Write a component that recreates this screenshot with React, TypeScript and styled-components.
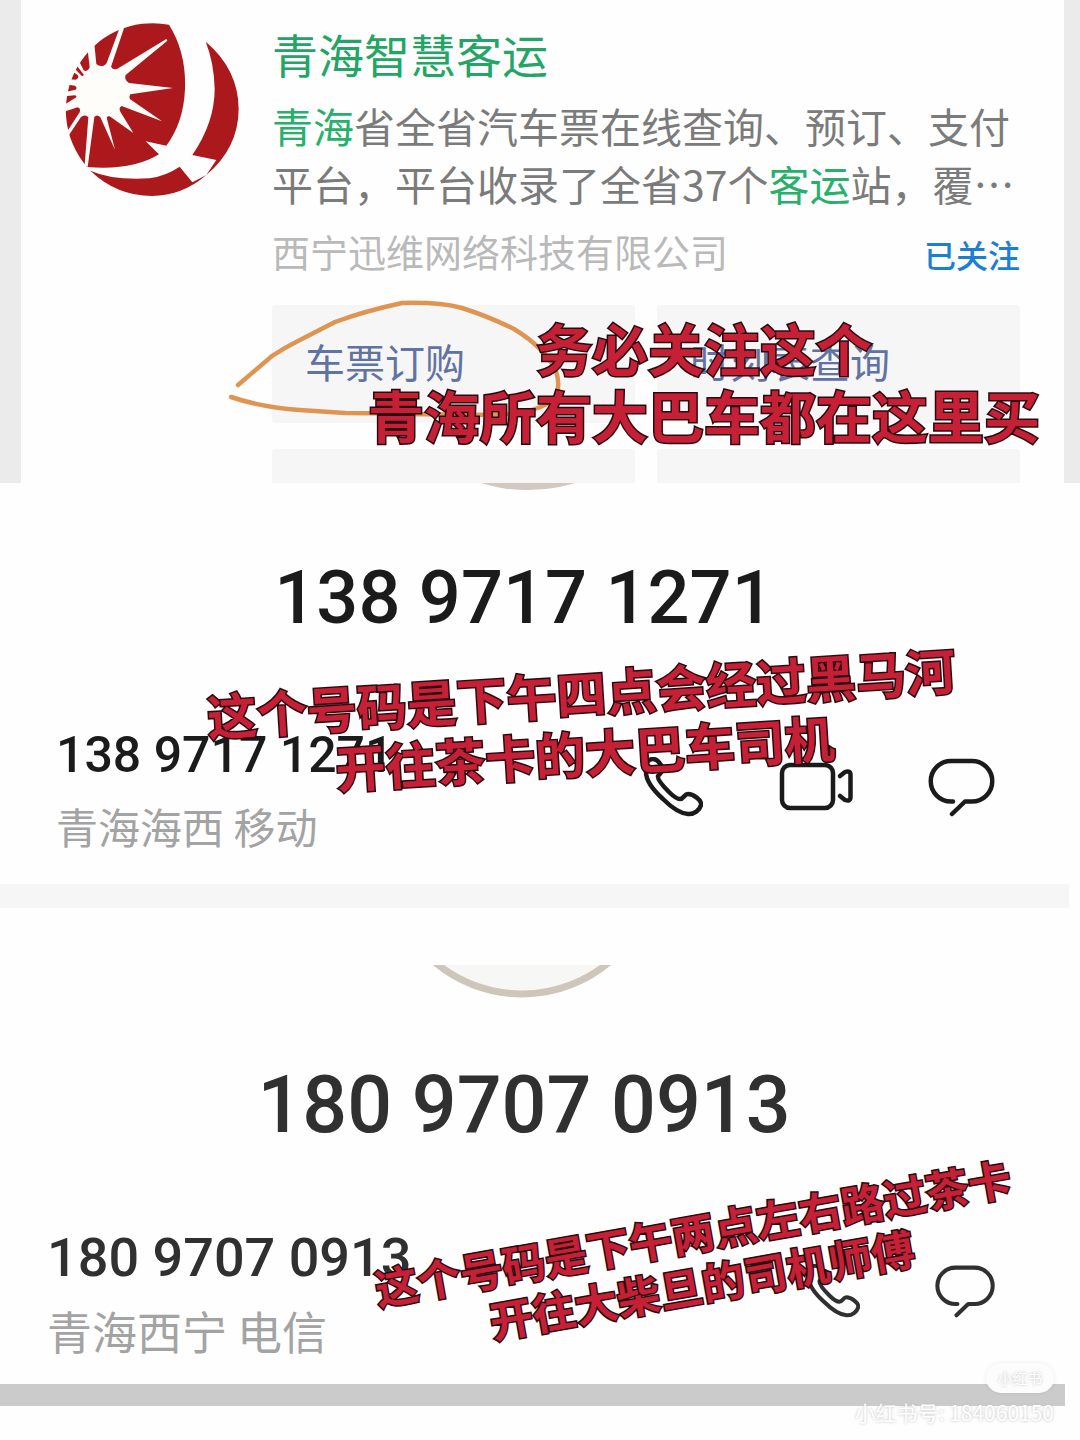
import React from "react";
import styled, { createGlobalStyle } from "styled-components";

const cjk = `"Noto Sans CJK SC", sans-serif`;

const GlobalStyle = createGlobalStyle`
  *, *::before, *::after { box-sizing: border-box; }
  body { margin: 0; background: #fefefe; font-family: ${cjk}; }
  button { border: 0; padding: 0; margin: 0; background: none; font: inherit; color: inherit; cursor: pointer; }
  h1, h2, p { margin: 0; font-weight: 400; }
  svg { display: block; }
`;

const Page = styled.main`
  position: relative;
  overflow: hidden;
`;

const MiniProgram = styled.section`
  position: relative;
  display: flex;
  gap: 33px;
  padding: 21px 44px 0 42px;
  border-left: 21px solid #ebebeb;
  border-right: 16px solid #ebebeb;
`;

const Logo = styled.svg`
  flex: none;
  width: 176px;
  height: 176px;
`;

const Info = styled.div`
  flex: 1;
  min-width: 0;
  white-space: nowrap;
`;

const Title = styled.h1`
  font-size: 46px;
  line-height: 64px;
  color: #22a565;
`;

const Description = styled.p`
  margin-top: 11px;
  font-size: 41px;
  line-height: 58px;
  color: #7b7b7b;
`;

const Match = styled.em`
  font-style: normal;
  color: #27b06c;
`;

const Publisher = styled.div`
  display: flex;
  justify-content: space-between;
  align-items: center;
  margin-top: 9px;
  line-height: 60px;
`;

const Company = styled.span`
  font-size: 38px;
  color: #b9b9b9;
`;

const Followed = styled.button`
  padding-top: 6px;
  font-size: 32px;
  line-height: 50px;
  font-weight: 500;
  color: #1c80d2;
`;

const Services = styled.div`
  display: grid;
  grid-template-columns: 1fr 1fr;
  gap: 26px 22px;
  margin-top: 24px;
`;

const Service = styled.button<{ $cut?: boolean }>`
  height: ${(p) => (p.$cut ? 34 : 118)}px;
  padding: 0 33px 6px;
  border-radius: ${(p) => (p.$cut ? "4px 4px 0 0" : "4px")};
  background: #f6f6f6;
  color: #6173a0;
  font-size: 40px;
  text-align: left;
`;

const HandDrawn = styled.svg`
  position: absolute;
  left: 206px;
  top: 296px;
  width: 340px;
  height: 126px;
  pointer-events: none;
`;

const Callout = styled.p<{ $x: string; $y: string; $size: number; $line: number; $angle?: number }>`
  position: absolute;
  left: ${(p) => p.$x};
  top: ${(p) => p.$y};
  transform: translate(-50%, -50%) rotate(${(p) => p.$angle ?? 0}deg);
  font-size: ${(p) => p.$size}px;
  line-height: ${(p) => p.$line}px;
  font-weight: 700;
  text-align: center;
  white-space: nowrap;
  color: #c52036;
  -webkit-text-stroke: 3px #2a0a10;
  paint-order: stroke fill;
  pointer-events: none;
`;

const Contact = styled.section<{ $ink: string }>`
  position: relative;
  color: ${(p) => p.$ink};
`;

const Avatar = styled.svg`
  width: 280px;
  height: 34px;
  margin: 0 auto;
`;

const Centered = styled.div<{ $gap: number }>`
  display: flex;
  flex-direction: column;
  gap: ${(p) => p.$gap}px;
  padding-right: 32px;
  text-align: center;
`;

const BigNumber = styled.h2<{ $size: number }>`
  font-family: Roboto, sans-serif;
  font-size: ${(p) => p.$size}px;
  font-weight: 500;
  line-height: 80px;
  white-space: nowrap;
`;

const Row = styled.div<{ $top: number; $bottom: number; $left: number }>`
  display: flex;
  justify-content: space-between;
  align-items: center;
  padding: ${(p) => `${p.$top}px 85px ${p.$bottom}px ${p.$left}px`};
`;

const Lines = styled.div<{ $gap: number }>`
  display: flex;
  flex-direction: column;
  gap: ${(p) => p.$gap}px;
  white-space: nowrap;
`;

const Number = styled.p<{ $size: number }>`
  font-family: Roboto, sans-serif;
  font-size: ${(p) => p.$size}px;
  font-weight: 500;
  line-height: 60px;
`;

const Carrier = styled.p<{ $size: number }>`
  font-size: ${(p) => p.$size}px;
  line-height: 54px;
  color: #a3a3a3;
`;

const Actions = styled.div`
  display: flex;
  align-items: center;
  gap: 74px;
`;

const Glyph = styled.svg`
  fill: none;
  stroke: currentColor;
  stroke-width: 4.5;
  stroke-linecap: round;
  stroke-linejoin: round;
`;

const Divider = styled.div<{ $color: string; $height: number; $end: number }>`
  height: ${(p) => p.$height}px;
  margin-right: ${(p) => p.$end}px;
  background: ${(p) => p.$color};
`;

const Spacer = styled.div`
  height: 57px;
`;

const Footer = styled.footer`
  position: relative;
  height: 34px;
`;

const Watermark = styled.div`
  position: absolute;
  right: 26px;
  bottom: 13px;
  display: flex;
  flex-direction: column;
  align-items: flex-end;
  gap: 4px;
  color: #fff;
  font-size: 21px;
  line-height: 30px;
  white-space: nowrap;
  text-shadow: 0 0 3px #bbb;
`;

const Badge = styled.span`
  width: 68px;
  border-radius: 15px;
  background: #fcfcfc;
  font-size: 15px;
  text-align: center;
  box-shadow: 0 0 4px rgba(0, 0, 0, 0.08);
`;

const PhoneIcon = ({ scale = 1 }: { scale?: number }) => (
  <Glyph width={60 * scale} height={64 * scale} viewBox="0 0 60 64" aria-hidden="true">
    <path d="M3 15C2 6 5 2 10 2c4 0 7 4 9 8 2 5-2 6-4 9-1 4 7 12 11 16 4 4 8 7 11 7 4 0 4-5 8-5 5 0 14 6 13 11-1 5-7 9.500-13 9-7-.5-17-7-25-15C10 33 3 23 3 15z" />
  </Glyph>
);

const VideoIcon = () => (
  <Glyph width="76" height="64" viewBox="0 0 76 64" aria-hidden="true">
    <rect x="5" y="8" width="51" height="43" rx="8" />
    <path d="M63 19l5-4q5.500-2 5.500 3v22q0 5-5.500 3l-5-4" />
  </Glyph>
);

const BubbleIcon = ({ scale = 1 }: { scale?: number }) => (
  <Glyph width={68 * scale} height={64 * scale} viewBox="0 0 68 64" aria-hidden="true">
    <path d="M26 44.500h-2A20.250 20.250 0 0 1 24 4h21a20.250 20.250 0 0 1 0 40.500h-7L25 57" />
  </Glyph>
);

export default function App() {
  return (
    <>
      <GlobalStyle />
      <Page>
        <MiniProgram>
          <Logo viewBox="190 66 528 528" role="img" aria-label="青海智慧客运">
            <g fill="#ac191c">
              <path d="M508 77Q560 160 556 270Q552 370 500 440L438 427L478 466Q400 515 262 504A261 261 0 0 1 508 77z" />
              <path d="M272 515Q340 545 450 538Q500 530 540 503L578 550L620 528Q548 590 457 591Q350 590 272 515z" />
              <path d="M618 128Q716 210 717 330Q716 448 620 528L650 483L578 468Q645 370 645 270Q643 190 618 128z" />
            </g>
            <path
              fill="#fffdfa"
              d="M360 86L373 88L334 203Q340 214 352 210L500 120L503 125L378 228Q372 242 388 252L520 267L392 286Q385 298 396 304L487 367L366 321Q356 326 362 338L401 402L330 352Q320 350 322 360L346 452L302 355Q292 344 284 354L264 504L255 498L266 355Q258 345 244 354L204 414L198 404L240 340Q244 328 234 325L193 338L193 318L230 295Q232 290 226 289L193 292L193 280L228 272Q234 266 226 260L198 256L202 240L228 242Q240 238 234 228L210 212L217 200L247 232L253 228L230 198L238 186L252 214Q264 220 270 205L264 153L284 134L290 195Q298 204 312 200Q320 198 322 190z"
            />
          </Logo>
          <Info>
            <Title>青海智慧客运</Title>
            <Description>
              <Match>青海</Match>省全省汽车票在线查询、预订、支付
              <br />
              平台，平台收录了全省37个<Match>客运</Match>站，覆…
            </Description>
            <Publisher>
              <Company>西宁迅维网络科技有限公司</Company>
              <Followed type="button">已关注</Followed>
            </Publisher>
            <Services>
              <Service type="button">车票订购</Service>
              <Service type="button">时刻表查询</Service>
              <Service type="button" $cut aria-label="更多服务" />
              <Service type="button" $cut aria-label="更多服务" />
            </Services>
          </Info>
          <HandDrawn viewBox="227 296 340 126" aria-hidden="true">
            <path
              d="M238 385L272 356Q284 348 298 341L335 322Q365 311 402 303Q440 302 462 308Q490 317 514 329Q545 348 556 371Q562 390 552 401Q535 413 495 415L400 414Q370 413 345 413L300 410Q260 407 231 397"
              fill="none"
              stroke="#de9552"
              strokeWidth="4.500"
              strokeLinecap="round"
              strokeLinejoin="round"
            />
          </HandDrawn>
          <Callout $x="calc(65% + 5px)" $y="380px" $size={56} $line={67}>
            务必关注这个
            <br />
            青海所有大巴车都在这里买
          </Callout>
        </MiniProgram>

        <Contact $ink="#1b1b1b">
          <Centered $gap={41}>
            <Avatar viewBox="0 0 280 34" aria-hidden="true">
              <circle cx="144" cy="-154" r="161" fill="#d1c8c2" />
            </Avatar>
            <BigNumber $size={74}>138 9717 1271</BigNumber>
          </Centered>
          <Row $top={87} $bottom={31} $left={56}>
            <Lines $gap={14}>
              <Number $size={50}>138 9717 1271</Number>
              <Carrier $size={42}>青海海西 移动</Carrier>
            </Lines>
            <Actions>
              <button type="button" aria-label="语音通话"><PhoneIcon /></button>
              <button type="button" aria-label="视频通话"><VideoIcon /></button>
              <button type="button" aria-label="发送信息"><BubbleIcon /></button>
            </Actions>
          </Row>
          <Divider $color="#f6f6f6" $height={24} $end={11} />
          <Callout $x="54%" $y="238px" $size={50} $line={60} $angle={-3.6}>
            这个号码是下午四点会经过黑马河
            <br />
            开往茶卡的大巴车司机
          </Callout>
        </Contact>

        <Spacer />

        <Contact $ink="#303030">
          <Centered $gap={66}>
            <Avatar viewBox="0 0 280 34" aria-hidden="true">
              <circle cx="138" cy="-106" r="135" fill="#f7f7f6" stroke="#cdc7b9" strokeWidth="7" />
            </Avatar>
            <BigNumber $size={79}>180 9707 0913</BigNumber>
          </Centered>
          <Row $top={83} $bottom={26} $left={47}>
            <Lines $gap={16}>
              <Number $size={54}>180 9707 0913</Number>
              <Carrier $size={45}>青海西宁 电信</Carrier>
            </Lines>
            <Actions>
              <button type="button" aria-label="语音通话"><PhoneIcon scale={0.9} /></button>
              <button type="button" aria-label="发送信息"><BubbleIcon scale={0.9} /></button>
            </Actions>
          </Row>
          <Divider $color="#cbcbcb" $height={22} $end={15} />
          <Callout $x="64.5%" $y="292px" $size={43} $line={52} $angle={-10}>
            这个号码是下午两点左右路过茶卡
            <br />
            开往大柴旦的司机师傅
          </Callout>
        </Contact>

        <Footer>
          <Watermark>
            <Badge>小红书</Badge>
            <span>小红书号: 184060150</span>
          </Watermark>
        </Footer>
      </Page>
    </>
  );
}
